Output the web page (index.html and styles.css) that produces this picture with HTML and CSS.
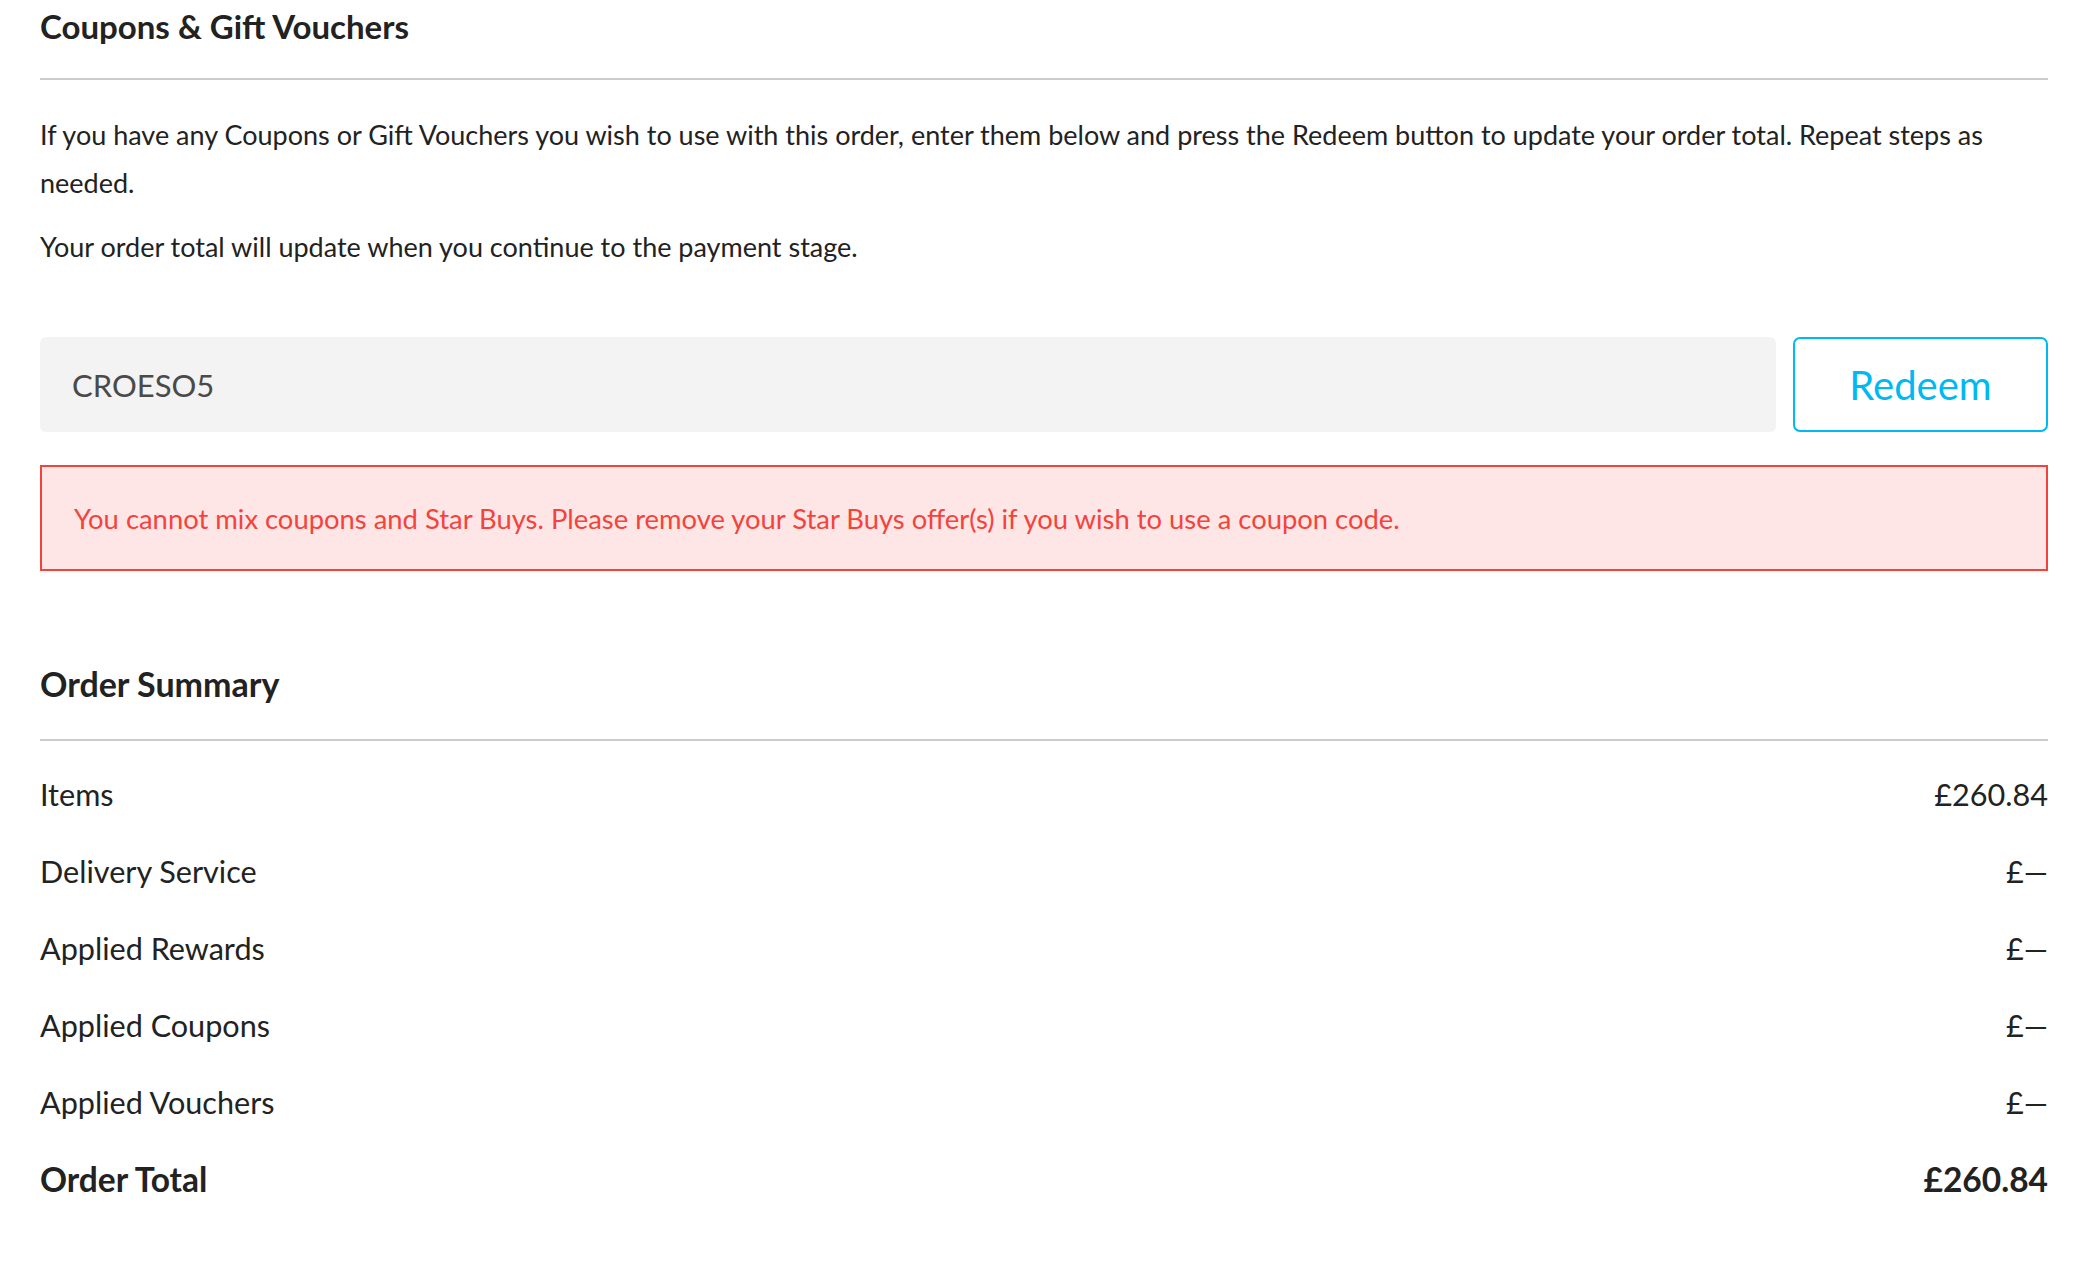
FILE: index.html
```html
<!DOCTYPE html>
<html lang="en">
<head>
    <meta charset="UTF-8">
    <title>Checkout - Coupons</title>
    <link rel="stylesheet" href="styles.css">
</head>
<body>
    <main class="checkout">
        <section class="coupons">
            <h2 class="section-title">Coupons &amp; Gift Vouchers</h2>
            <p class="intro">If you have any Coupons or Gift Vouchers you wish to use with this order, enter them below and press the Redeem button to update your order total. Repeat steps as needed.</p>
            <p class="intro">Your order total will update when you continue to the payment stage.</p>

            <form class="redeem" onsubmit="return false">
                <input class="code-input" type="text" name="code" value="CROESO5">
                <button class="redeem-btn" type="submit">Redeem</button>
            </form>

            <div class="alert-error">
                You cannot mix coupons and Star Buys. Please remove your Star Buys offer(s) if you wish to use a coupon code.
            </div>
        </section>

        <section class="summary">
            <h2 class="section-title title-lg">Order Summary</h2>
            <div class="summary-rows">
                <div class="summary-row"><span>Items</span><span>&pound;260.84</span></div>
                <div class="summary-row"><span>Delivery Service</span><span>&pound;&mdash;</span></div>
                <div class="summary-row"><span>Applied Rewards</span><span>&pound;&mdash;</span></div>
                <div class="summary-row"><span>Applied Coupons</span><span>&pound;&mdash;</span></div>
                <div class="summary-row"><span>Applied Vouchers</span><span>&pound;&mdash;</span></div>
                <div class="summary-row summary-total"><span>Order Total</span><span>&pound;260.84</span></div>
            </div>
        </section>
    </main>
</body>
</html>
```

FILE: styles.css
```css
body {
    margin: 0;
    padding: 0;
    background-color: #ffffff;
    color: #222222;
    font-family: Lato, "Liberation Sans", sans-serif;
}
.checkout {
    padding: 0 30px 0 40px;
}
.section-title {
    margin: 0;
    padding: 9px 0 35px;
    font-size: 33px;
    line-height: 34px;
    font-weight: 700;
    border-bottom: 2px solid #cccccc;
}
.title-lg {
    font-size: 34px;
    line-height: 38px;
    padding: 0 0 36px;
}
.intro {
    margin: 0 0 16px;
    font-size: 27px;
    line-height: 48px;
}
.coupons .section-title + .intro {
    margin-top: 31px;
}
.redeem {
    display: flex;
    gap: 17px;
    margin-top: 66px;
}
.code-input {
    flex: 1;
    height: 95px;
    box-sizing: border-box;
    padding: 0 32px;
    border: none;
    border-radius: 6px;
    background-color: #f3f3f3;
    color: #4a4a4a;
    font-family: inherit;
    font-size: 31px;
}
.redeem-btn {
    width: 255px;
    height: 95px;
    border: 2px solid #00b9f2;
    border-radius: 7px;
    background-color: #ffffff;
    color: #00b9f2;
    font-family: inherit;
    font-size: 40px;
    cursor: pointer;
}
.alert-error {
    margin-top: 33px;
    height: 106px;
    box-sizing: border-box;
    display: flex;
    align-items: center;
    padding: 0 32px;
    border: 2px solid #f4433b;
    background-color: #ffe6e6;
    color: #f4433b;
    font-size: 27.4px;
}
.summary {
    margin-top: 94px;
}
.summary-rows {
    margin-top: 15px;
}
.summary-row {
    display: flex;
    justify-content: space-between;
    padding: 20px 0;
    font-size: 30.6px;
    line-height: 37px;
}
.summary-total {
    font-weight: 700;
    font-size: 33.5px;
}
```
